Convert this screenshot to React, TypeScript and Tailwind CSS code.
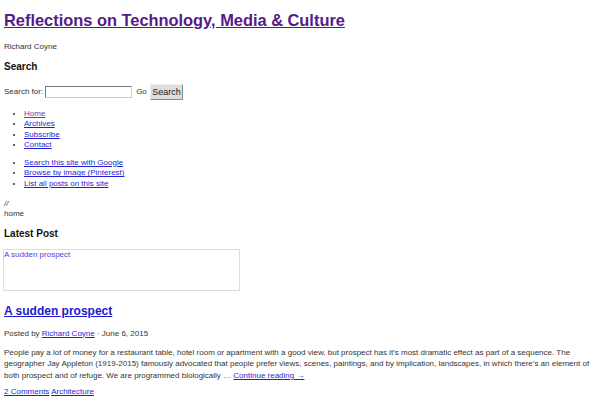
const link = 'text-[#1f1fd6] underline';

export default function App() {
  return (
    <div className="bg-white min-h-[400px] w-[600px] overflow-hidden px-[4px] text-[#333] text-[8px] leading-[10px] font-['Liberation_Sans',Arial,sans-serif]">
      {/* Site header */}
      <div className="pt-[10px] text-[16.4px] leading-[20px] font-bold">
        <a className="text-[#551a8b] underline">Reflections on Technology, Media &amp; Culture</a>
      </div>
      <div className="mt-[12px]">Richard Coyne</div>

      {/* Search */}
      <h2 className="mt-[9px] text-[10px] leading-[12px] font-bold text-[#111]">Search</h2>
      <div className="mt-[11px] flex items-center h-[16px]">
        <span>Search for:</span>
        <input className="ml-[2px] w-[87px] h-[12px] bg-white border border-t-[#777] border-l-[#777] border-r-[#ccc] border-b-[#ccc]" />
        <span className="ml-[4px]">Go</span>
        <button className="ml-[3px] h-[16px] px-[1.5px] bg-[#ddd] text-[9px] text-[#222] border border-t-[#eee] border-l-[#eee] border-r-[#888] border-b-[#888]">
          Search
        </button>
      </div>

      {/* Navigation */}
      <ul className="mt-[9px] pl-[20px] list-disc leading-[10.33px]">
        <li><a className="text-[#6a3aa6] underline">Home</a></li>
        <li><a className={link}>Archives</a></li>
        <li><a className={link}>Subscribe</a></li>
        <li><a className={link}>Contact</a></li>
      </ul>
      <ul className="mt-[7.5px] pl-[20px] list-disc leading-[10.5px]">
        <li><a className={link}>Search this site with Google</a></li>
        <li><a className={link}>Browse by image (Pinterest)</a></li>
        <li><a className={link}>List all posts on this site</a></li>
      </ul>

      <div className="mt-[10px] leading-[9.5px]">
        <div className="italic">//</div>
        <div>home</div>
      </div>

      {/* Latest post widget */}
      <h2 className="mt-[9.75px] text-[10px] leading-[12px] font-bold text-[#111]">Latest Post</h2>
      <div className="mt-[9px] -ml-[1px] w-[237px] h-[42px] border border-[#ddd]">
        <a className="text-[#4a3ee0]">A sudden prospect</a>
      </div>

      {/* Post */}
      <h1 className="mt-[12px] text-[12px] leading-[16px] font-bold">
        <a className="text-[#1a1acc] underline">A sudden prospect</a>
      </h1>
      <div className="mt-[9.5px]">
        Posted by <a className={link}>Richard Coyne</a> · June 6, 2015
      </div>
      <p className="mt-[8px] leading-[11.5px]">
        People pay a lot of money for a restaurant table, hotel room or apartment with a good view, but prospect has it’s most dramatic effect as part of a sequence. The geographer Jay Appleton (1919-2015) famously advocated that people prefer views, scenes, paintings, and by implication, landscapes, in which there’s an element of both prospect and of refuge. We are programmed biologically … <a className={link}>Continue reading →</a>
      </p>
      <div className="mt-[6.25px]">
        <a className={link}>2 Comments</a> <a className={link}>Architecture</a>
      </div>
    </div>
  );
}
